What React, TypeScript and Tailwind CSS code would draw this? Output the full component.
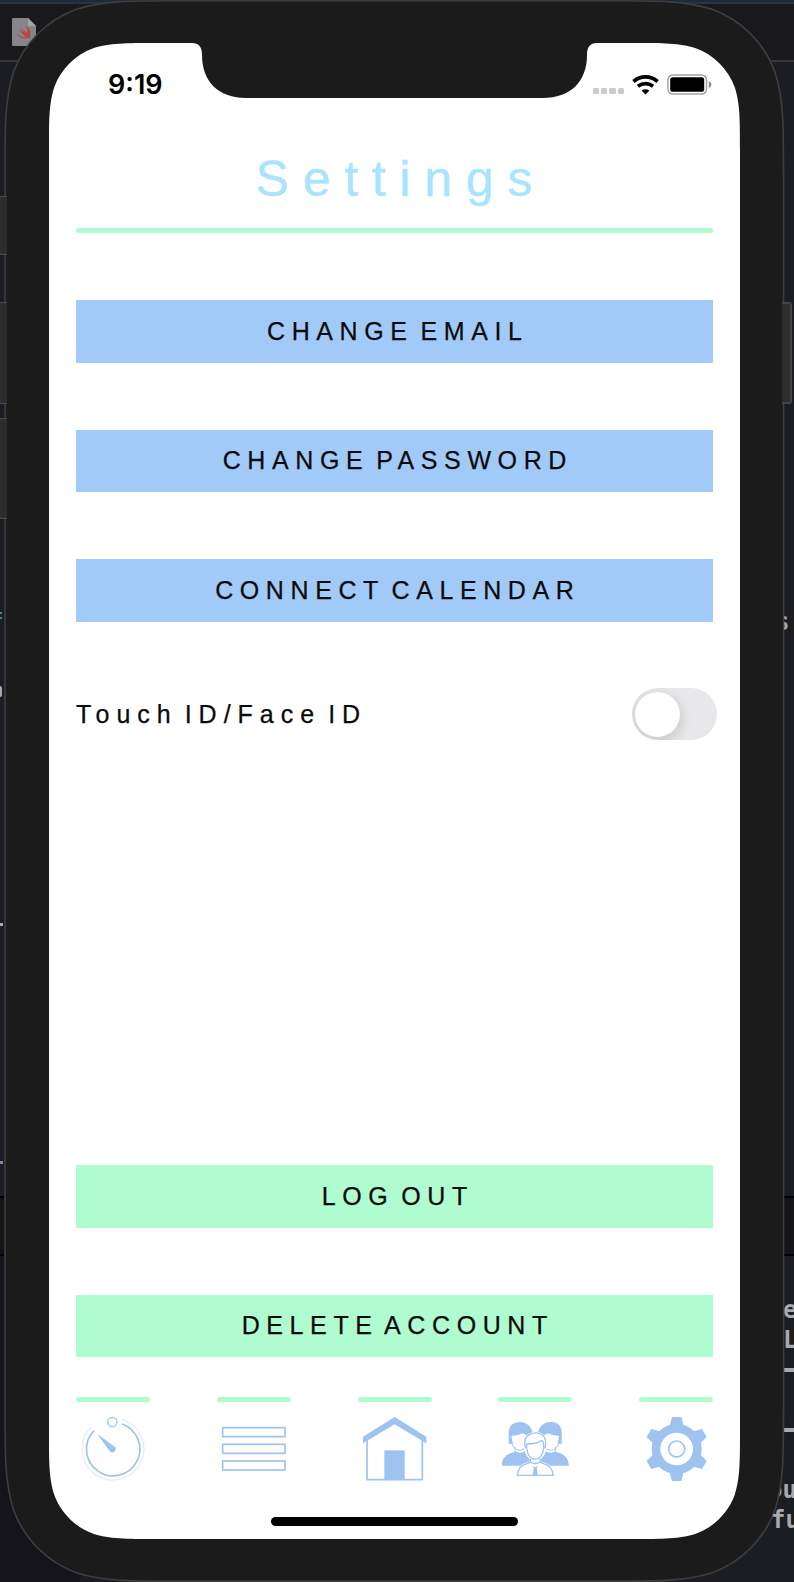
import React from "react";

const BLUE = "#9fc3f1";

/** Rounded rectangle with continuous (squircle-like) corners. */
function smoothRect(l: number, t: number, r: number, b: number, rad: number) {
  const [p, q, s, u, v, w, z] = [1.5287, 1.0885, 0.8684, 0.6315, 0.3729, 0.1691, 0.0749].map((k) => k * rad);
  return [
    `M${l + p} ${t}H${r - p}`,
    `C${r - q} ${t} ${r - s} ${t} ${r - u} ${t + z}C${r - v} ${t + w} ${r - w} ${t + v} ${r - z} ${t + u}`,
    `C${r} ${t + s} ${r} ${t + q} ${r} ${t + p}V${b - p}`,
    `C${r} ${b - q} ${r} ${b - s} ${r - z} ${b - u}C${r - w} ${b - v} ${r - v} ${b - w} ${r - u} ${b - z}`,
    `C${r - s} ${b} ${r - q} ${b} ${r - p} ${b}H${l + p}`,
    `C${l + q} ${b} ${l + s} ${b} ${l + u} ${b - z}C${l + v} ${b - w} ${l + w} ${b - v} ${l + z} ${b - u}`,
    `C${l} ${b - s} ${l} ${b - q} ${l} ${b - p}V${t + p}`,
    `C${l} ${t + q} ${l} ${t + s} ${l + z} ${t + u}C${l + w} ${t + v} ${l + v} ${t + w} ${l + u} ${t + z}`,
    `C${l + s} ${t} ${l + q} ${t} ${l + p} ${t}Z`,
  ].join("");
}

function Bezel() {
  const outer = smoothRect(5, 0.8, 783.5, 1581.2, 113);
  const inner = smoothRect(49, 43, 740, 1539, 70);
  return (
    <svg className="pointer-events-none absolute inset-0" width="794" height="1582" viewBox="0 0 794 1582">
      <path d={outer + inner} fill="#1b1b1b" fillRule="evenodd" />
      <path d={outer} fill="none" stroke="#3e3e40" strokeWidth="1.6" />
      <path
        d="M190 40V43H192C199 43 202 47 202 55C202 82 219 98 246 98H543C570 98 587 82 587 55C587 47 590 43 597 43H599V40Z"
        fill="#1b1b1b"
      />
    </svg>
  );
}

function EditorBackdrop() {
  return (
    <div className="absolute inset-0 overflow-hidden bg-[#1c1d23] font-['DejaVu_Sans_Mono',monospace] text-[24px] leading-none font-bold text-[#a9a9ab]">
      <div className="absolute inset-x-0 top-0 h-[62px] border-b-2 border-[#36363b] bg-[#19181d]" />
      <div className="absolute inset-x-0 top-0 h-1 border-b-2 border-[#303238] bg-[#1b2a3c]" />
      <svg className="absolute top-[18px] left-3" width="24" height="28" viewBox="0 0 24 28">
        <path d="M1 0H16L24 8V27Q24 28 23 28H1Q0 28 0 27V1Q0 0 1 0Z" fill="#85858a" />
        <path d="M16 0L24 8H16Z" fill="#a3a3a6" />
        <path d="M4 15Q10 20 14 19Q9 15 6 10Q10 14 13 15Q10 12 8 9Q12 13 15 15Q16 12 14 8Q20 12 18 17Q19 19 18 21Q17 19 15 20Q9 22 4 15Z" fill="#b5483d" />
      </svg>
      <div className="absolute top-[612px] left-0 h-[2px] w-[2px] bg-[#4f8577]" />
      <div className="absolute top-[617px] left-0 h-[2px] w-[2px] bg-[#4f8577]" />
      <div className="absolute top-[686px] left-0 h-[11px] w-[2px] rounded-r bg-[#a9a9ab]" />
      <div className="absolute top-[923px] left-0 h-[3px] w-[3px] bg-[#a9a9ab]" />
      <div className="absolute top-[1161px] left-0 h-[3px] w-[3px] bg-[#8e7fb0]" />
      <div className="absolute inset-x-0 top-[1196px] h-[60px] border-y-2 border-black bg-[#151419]" />
      <div className="absolute top-[1256px] left-0 h-[326px] w-20 bg-[#15141a]" />
      <span className="absolute top-[610px] left-[775px]">s</span>
      <span className="absolute top-[1298px] left-[783px]">e</span>
      <span className="absolute top-[1328px] left-[783px]">L</span>
      <div className="absolute top-[1368px] left-[784px] h-[4px] w-[10px] bg-[#a9a9ab]" />
      <div className="absolute top-[1428px] left-[784px] h-[4px] w-[10px] bg-[#a9a9ab]" />
      <span className="absolute top-[1478px] left-[768px]">ou</span>
    </div>
  );
}

/** Side buttons and fragments of the editor that lie over the device edge. */
function EdgePieces() {
  return (
    <>
      <div className="absolute top-[196px] left-0 h-[59px] w-[7px] border-y border-[#4b4b4d] bg-[#2d2d2d]" />
      <div className="absolute top-[302px] left-0 h-[102px] w-[7px] border-y border-[#4b4b4d] bg-[#2d2d2d]" />
      <div className="absolute top-[418px] left-0 h-[101px] w-[7px] border-y border-[#4b4b4d] bg-[#2d2d2d]" />
      <div className="absolute top-[302px] left-[782px] h-[102px] w-[10px] rounded-r-[3px] border-y-2 border-r-2 border-[#444] bg-[#2d2d2d]" />
      <span className="absolute top-[1508px] left-[771px] font-['DejaVu_Sans_Mono',monospace] text-[24px] leading-none font-bold text-[#a9a9ab]">fu</span>
    </>
  );
}

function StatusBar() {
  return (
    <header className="flex h-[83px] items-center justify-between pr-[28px] pl-[59px]">
      <span className="font-['Inter',sans-serif] text-[27px] leading-none font-semibold text-black">9:19</span>
      <div className="flex items-center">
        <div className="mt-[13px] mr-2 flex gap-[2px]">
          {[0, 1, 2, 3].map((i) => (
            <i key={i} className="h-[6px] w-[6.3px] rounded-[1.5px] bg-[#cbcbcb]" />
          ))}
        </div>
        <svg className="mr-2" width="27" height="20" viewBox="0 0 27 20" fill="none" stroke="#000">
          <path d="M1.4 6.4Q7 1.9 13.5 1.9T25.6 6.4" strokeWidth="3.8" />
          <path d="M5.9 11.3Q9.5 8.7 13.5 8.7T21.1 11.3" strokeWidth="3.7" />
          <path d="M9.6 15.6Q13.5 12.9 17.4 15.6L13.5 19.6Z" fill="#000" stroke="none" />
        </svg>
        <svg width="45" height="21" viewBox="0 0 45 21">
          <rect x=".9" y=".9" width="38.6" height="19.2" rx="5" fill="none" stroke="#a3a3a3" strokeWidth="1.5" />
          <rect x="3.2" y="3.2" width="34" height="14.6" rx="2.6" fill="#000" />
          <path d="M41.8 7V14Q44.4 13 44.4 10.5T41.8 7Z" fill="#8d8d8d" />
        </svg>
      </div>
    </header>
  );
}

function ActionButton({ label, tone }: { label: string; tone: "blue" | "green" }) {
  return (
    <button
      className={`flex h-[62.5px] w-full shrink-0 items-center justify-center pl-[6.6px] text-[25px] leading-none tracking-[6.6px] text-[#0a0a0a] [-webkit-text-stroke:0.25px_#0a0a0a] [word-spacing:-6.6px] ${
        tone === "blue" ? "bg-[#a2caf9]" : "bg-[#b0fcd1]"
      }`}
    >
      {label}
    </button>
  );
}

function TimerIcon() {
  return (
    <svg className="h-[70px] w-[74px]" viewBox="48 102 222 210" fill="none" stroke={BLUE}>
      <circle cx="157" cy="126" r="14" strokeWidth="4" />
      <path d="M186 132A80 80 0 1 1 102 152" strokeWidth="5" />
      <path d="M186 118A93 93 0 1 1 93 141" strokeWidth="4" opacity=".28" />
      <path d="M111 161L165 201A10 10 0 1 1 149 213Z" fill={BLUE} stroke="none" />
    </svg>
  );
}

function ListIcon() {
  return (
    <svg className="h-[70px] w-[74px]" viewBox="470 102 222 210" fill="none" stroke={BLUE} strokeWidth="5">
      <rect x="487" y="143" width="187" height="27" />
      <rect x="487" y="193" width="187" height="27" />
      <rect x="487" y="243" width="187" height="27" />
    </svg>
  );
}

function HomeIcon() {
  return (
    <svg className="h-[70px] w-[74px]" viewBox="894 102 222 210">
      <path d="M921 180V299H1087V180" fill="none" stroke={BLUE} strokeWidth="5" />
      <path d="M909 170L1004 111L1099 170V190L1004 133L909 190Z" fill={BLUE} />
      <rect x="973" y="211" width="61" height="89" fill={BLUE} />
    </svg>
  );
}

function Member() {
  return (
    <g>
      <path d="M324 257Q324 224 362 216V202H396V218L420 230V257Z" fill={BLUE} />
      <path d="M364 205V213Q379 224 394 213V205" fill="#fff" />
      <path d="M345 191V160C344 139 356 126 379 126C396 126 410 136 416 155L412 190Z" fill={BLUE} />
      <path d="M353 167Q372 168 386 160Q394 162 400 168V185Q395 209 379 210Q356 206 353 167Z" fill="#fff" />
      <path d="M352 180Q356 211 379 211Q393 210 400 198" fill="none" stroke={BLUE} strokeWidth="3" />
    </g>
  );
}

function PeopleIcon() {
  return (
    <svg className="h-[70px] w-[74px]" viewBox="312.75 102 222 210">
      <Member />
      <g transform="translate(849 0) scale(-1 1)">
        <Member />
      </g>
      <path
        d="M370 287Q372 255 400 250L410 245V236Q396 224 394 205Q386 169 409 162Q430 152 448 165Q462 178 455 205Q453 224 439 236V245L449 250Q476 255 479 287Z"
        fill="#fff"
        stroke="#fff"
        strokeWidth="5"
      />
      <g fill="none" stroke={BLUE} strokeWidth="4">
        <path d="M371 286Q373 257 400 251L410 246V236M439 236V246L449 251Q476 257 478 286" />
        <path d="M369 286H480M410 246Q424 255 439 246" />
        <path d="M399 192Q426 193 443 182Q450 185 450 192V204Q446 237 424 238Q403 237 399 204Z" />
        <path d="M395 205Q387 170 409 163Q430 153 447 166Q460 178 454 205" />
      </g>
      <path d="M415 258L424 262L433 258L429 265L432 286H417L420 265Z" fill={BLUE} />
    </svg>
  );
}

function GearIcon() {
  return (
    <svg className="h-[70px] w-[74px]" viewBox="735 102 222 210">
      <g transform="translate(848 207)">
        {[0, 60, 120, 180, 240, 300].map((a) => (
          <path key={a} d="M-22 -66L-14 -96H14L22 -66Z" fill={BLUE} transform={`rotate(${a})`} />
        ))}
        <circle r="62" fill="none" stroke={BLUE} strokeWidth="26" />
        <circle r="24" fill="none" stroke={BLUE} strokeWidth="5" />
      </g>
    </svg>
  );
}

const tabs = [TimerIcon, ListIcon, HomeIcon, PeopleIcon, GearIcon];

export default function App() {
  return (
    <div className="relative h-[1582px] w-[794px] overflow-hidden bg-[#1c1d23]">
      <EditorBackdrop />
      <div className="relative pt-[43px] pl-[49px]">
        <main className="flex h-[1496px] w-[691px] flex-col overflow-hidden rounded-[66px] bg-white font-['Liberation_Sans',Arial,sans-serif]">
          <StatusBar />
          <div className="flex flex-1 flex-col px-[27px]">
            <h1 className="mt-[25px] h-[77px] pl-[13px] text-center text-[50px] leading-[56px] tracking-[13.7px] text-[#a9e4ff] [-webkit-text-stroke:0.4px_#a9e4ff]">Settings</h1>
            <hr className="h-[5px] shrink-0 rounded-full border-0 bg-[#b0fcd1]" />
            <section className="mt-[67px] flex flex-col gap-[67px]">
              <ActionButton label="CHANGE EMAIL" tone="blue" />
              <ActionButton label="CHANGE PASSWORD" tone="blue" />
              <ActionButton label="CONNECT CALENDAR" tone="blue" />
            </section>
            <div className="mt-[66.5px] -mr-1 flex h-[52px] items-center justify-between">
              <span className="text-[25px] leading-none tracking-[7px] text-[#0a0a0a] [-webkit-text-stroke:0.25px_#0a0a0a] [word-spacing:-7px]">Touch ID/Face ID</span>
              <span role="switch" aria-checked="false" className="flex h-[52px] w-[85.5px] items-center overflow-hidden rounded-full bg-[#e8e8ea] pl-[3.5px]">
                <i className="size-[45px] rounded-full bg-white shadow-[0_4px_12px_2px_rgba(0,0,0,0.13)]" />
              </span>
            </div>
            <section className="mt-[425px] flex flex-col gap-[67px]">
              <ActionButton label="LOG OUT" tone="green" />
              <ActionButton label="DELETE ACCOUNT" tone="green" />
            </section>
            <nav className="mt-10 flex justify-between">
              {tabs.map((Icon, i) => (
                <a key={i} className="flex w-[74px] flex-col gap-3">
                  <i className="h-[5px] w-full rounded-full bg-[#b0fcd1]" />
                  <Icon />
                </a>
              ))}
            </nav>
            <div className="mt-[33px] h-[8.5px] w-[247px] shrink-0 self-center rounded-full bg-black" />
          </div>
        </main>
      </div>
      <Bezel />
      <EdgePieces />
    </div>
  );
}
